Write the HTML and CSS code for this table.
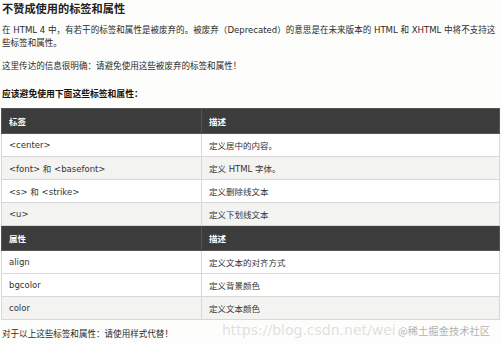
FILE: index.html
```html
<!DOCTYPE html>
<html lang="zh">
<head>
<meta charset="utf-8">
<link rel="stylesheet" href="styles.css">
</head>
<body>
<div class="page">
  <h2 class="title">不赞成使用的标签和属性</h2>
  <p class="para">在 HTML 4 中，有若干的标签和属性是被废弃的。被废弃（Deprecated）的意思是在未来版本的 HTML 和 XHTML 中将不支持这些标签和属性。</p>
  <p class="para para-2">这里传达的信息很明确：请避免使用这些被废弃的标签和属性！</p>
  <h3 class="subtitle">应该避免使用下面这些标签和属性：</h3>
  <table class="data">
    <tr class="head"><th class="c1">标签</th><th>描述</th></tr>
    <tr><td class="c1">&lt;center&gt;</td><td>定义居中的内容。</td></tr>
    <tr class="alt"><td class="c1">&lt;font&gt; 和 &lt;basefont&gt;</td><td>定义 HTML 字体。</td></tr>
    <tr><td class="c1">&lt;s&gt; 和 &lt;strike&gt;</td><td>定义删除线文本</td></tr>
    <tr class="alt"><td class="c1">&lt;u&gt;</td><td>定义下划线文本</td></tr>
    <tr class="head"><th class="c1">属性</th><th>描述</th></tr>
    <tr><td class="c1">align</td><td>定义文本的对齐方式</td></tr>
    <tr><td class="c1">bgcolor</td><td>定义背景颜色</td></tr>
    <tr class="alt"><td class="c1">color</td><td>定义文本颜色</td></tr>
  </table>
  <p class="para foot">对于以上这些标签和属性：请使用样式代替！</p>
  <div class="watermark"><span class="wm-url">https://blog.csdn.net/wei</span><span class="wm-brand">@稀土掘金技术社区</span></div>
</div>
</body>
</html>
```

FILE: styles.css
```css
html, body {
  margin: 0;
  padding: 0;
  background: #fdfdfb;
}
body {
  font-family: "DejaVu Sans", "Noto Sans CJK SC", sans-serif;
  color: #2a2a2a;
  width: 502px;
  height: 344px;
  overflow: hidden;
}
.page {
  position: relative;
  padding: 0 1px 0 2px;
  height: 344px;
  box-sizing: border-box;
}
.title {
  margin: 3px 0 0;
  font-size: 11.2px;
  line-height: 14px;
  font-weight: bold;
  color: #222;
}
.para {
  margin: 6.5px 0 0;
  font-size: 8.55px;
  line-height: 13px;
}
.para-2 {
  margin-top: 10px;
}
.subtitle {
  margin: 15px 0 0;
  font-size: 8.8px;
  line-height: 13px;
  font-weight: bold;
  color: #111;
}
.data {
  margin: 7.5px 0 0 -1px;
  width: 499px;
  border-collapse: collapse;
  font-size: 8.5px;
  border: 1px solid #d6d6d6;
}
.data th {
  background: #3c3c3c;
  color: #fff;
  text-align: left;
  font-weight: bold;
  height: 24px;
  padding: 0 0 0 7px;
  border: 1px solid #555;
}
.data td {
  background: #fff;
  height: 22px;
  padding: 0 0 0 7px;
  border: 1px solid #d8d8d8;
  color: #333;
}
.data tr.alt td {
  background: #f3f3f2;
}
.data .c1 {
  width: 192px;
}
.foot {
  margin-top: 8px;
}
.watermark {
  position: absolute;
  left: 222px;
  top: 319px;
  display: flex;
  align-items: baseline;
  gap: 0;
  white-space: nowrap;
  pointer-events: none;
}
.wm-url {
  font-family: "DejaVu Sans", sans-serif;
  font-size: 14px;
  color: rgba(200, 200, 200, 0.55);
  width: 176px;
  overflow: hidden;
}
.wm-brand {
  font-family: "Noto Sans CJK SC", sans-serif;
  font-size: 10.3px;
  color: rgba(150, 150, 150, 0.75);
  text-shadow: 0 0 1px #fff;
}
```
